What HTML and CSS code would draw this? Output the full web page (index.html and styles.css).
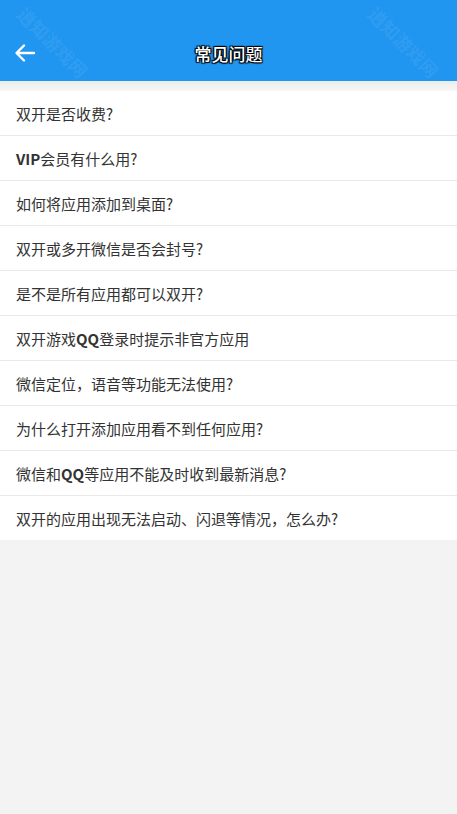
FILE: index.html
```html
<!DOCTYPE html>
<html lang="zh">
<head>
<meta charset="utf-8">
<link rel="stylesheet" href="styles.css">
</head>
<body>
<header class="bar">
  <span class="wm wm-left">逍知游戏网</span>
  <span class="wm wm-right">逍知游戏网</span>
  <svg class="back" width="24" height="24" viewBox="0 0 24 24"><path d="M21 12H4M11 4.5L3.5 12l7.5 7.5" fill="none" stroke="#fff" stroke-width="2.4" stroke-linecap="round" stroke-linejoin="round"/></svg>
  <h1 class="title">常见问题</h1>
</header>
<div class="spacer"></div>
<ul class="list">
  <li>双开是否收费?</li>
  <li><b>VIP</b>会员有什么用?</li>
  <li>如何将应用添加到桌面?</li>
  <li>双开或多开微信是否会封号?</li>
  <li>是不是所有应用都可以双开?</li>
  <li>双开游戏<b>QQ</b>登录时提示非官方应用</li>
  <li>微信定位，语音等功能无法使用?</li>
  <li>为什么打开添加应用看不到任何应用?</li>
  <li>微信和<b>QQ</b>等应用不能及时收到最新消息?</li>
  <li>双开的应用出现无法启动、闪退等情况，怎么办?</li>
</ul>
</body>
</html>
```
FILE: styles.css
```css
html, body {
  margin: 0;
  padding: 0;
  background: #f3f3f3;
  font-family: "Noto Sans CJK SC", "Noto Sans", sans-serif;
}
.bar {
  position: relative;
  height: 81px;
  background: #2196f0;
  display: flex;
  align-items: flex-end;
  justify-content: center;
  padding-bottom: 15px;
  box-sizing: border-box;
}
.back {
  position: absolute;
  left: 13px;
  top: 41px;
}
.title {
  margin: 0;
  font-size: 17px;
  font-weight: 500;
  line-height: 24px;
  color: #fff;
  text-shadow: 0 0 1px #000, 1px 1px 1px #000, -1px -1px 1px #000, 1px -1px 1px #000, -1px 1px 1px #000;
}
.wm {
  position: absolute;
  top: 30px;
  font-size: 18px;
  line-height: 24px;
  font-weight: 700;
  color: rgba(255,255,255,0.08);
  transform: rotate(45deg);
  white-space: nowrap;
}
.wm-left { left: 8px; }
.wm-right { right: 8px; }
.spacer {
  height: 10px;
  background: linear-gradient(#ececec, #f7f7f7);
}
.list {
  list-style: none;
  margin: 0;
  padding: 0;
  background: #fff;
}
.list li {
  height: 44px;
  border-bottom: 1px solid #e9e9e9;
  display: flex;
  align-items: center;
  padding-left: 16px;
  font-size: 15px;
  color: #333;
}
.list li:last-child { border-bottom: none; }
.list b { font-weight: 700; }
```
